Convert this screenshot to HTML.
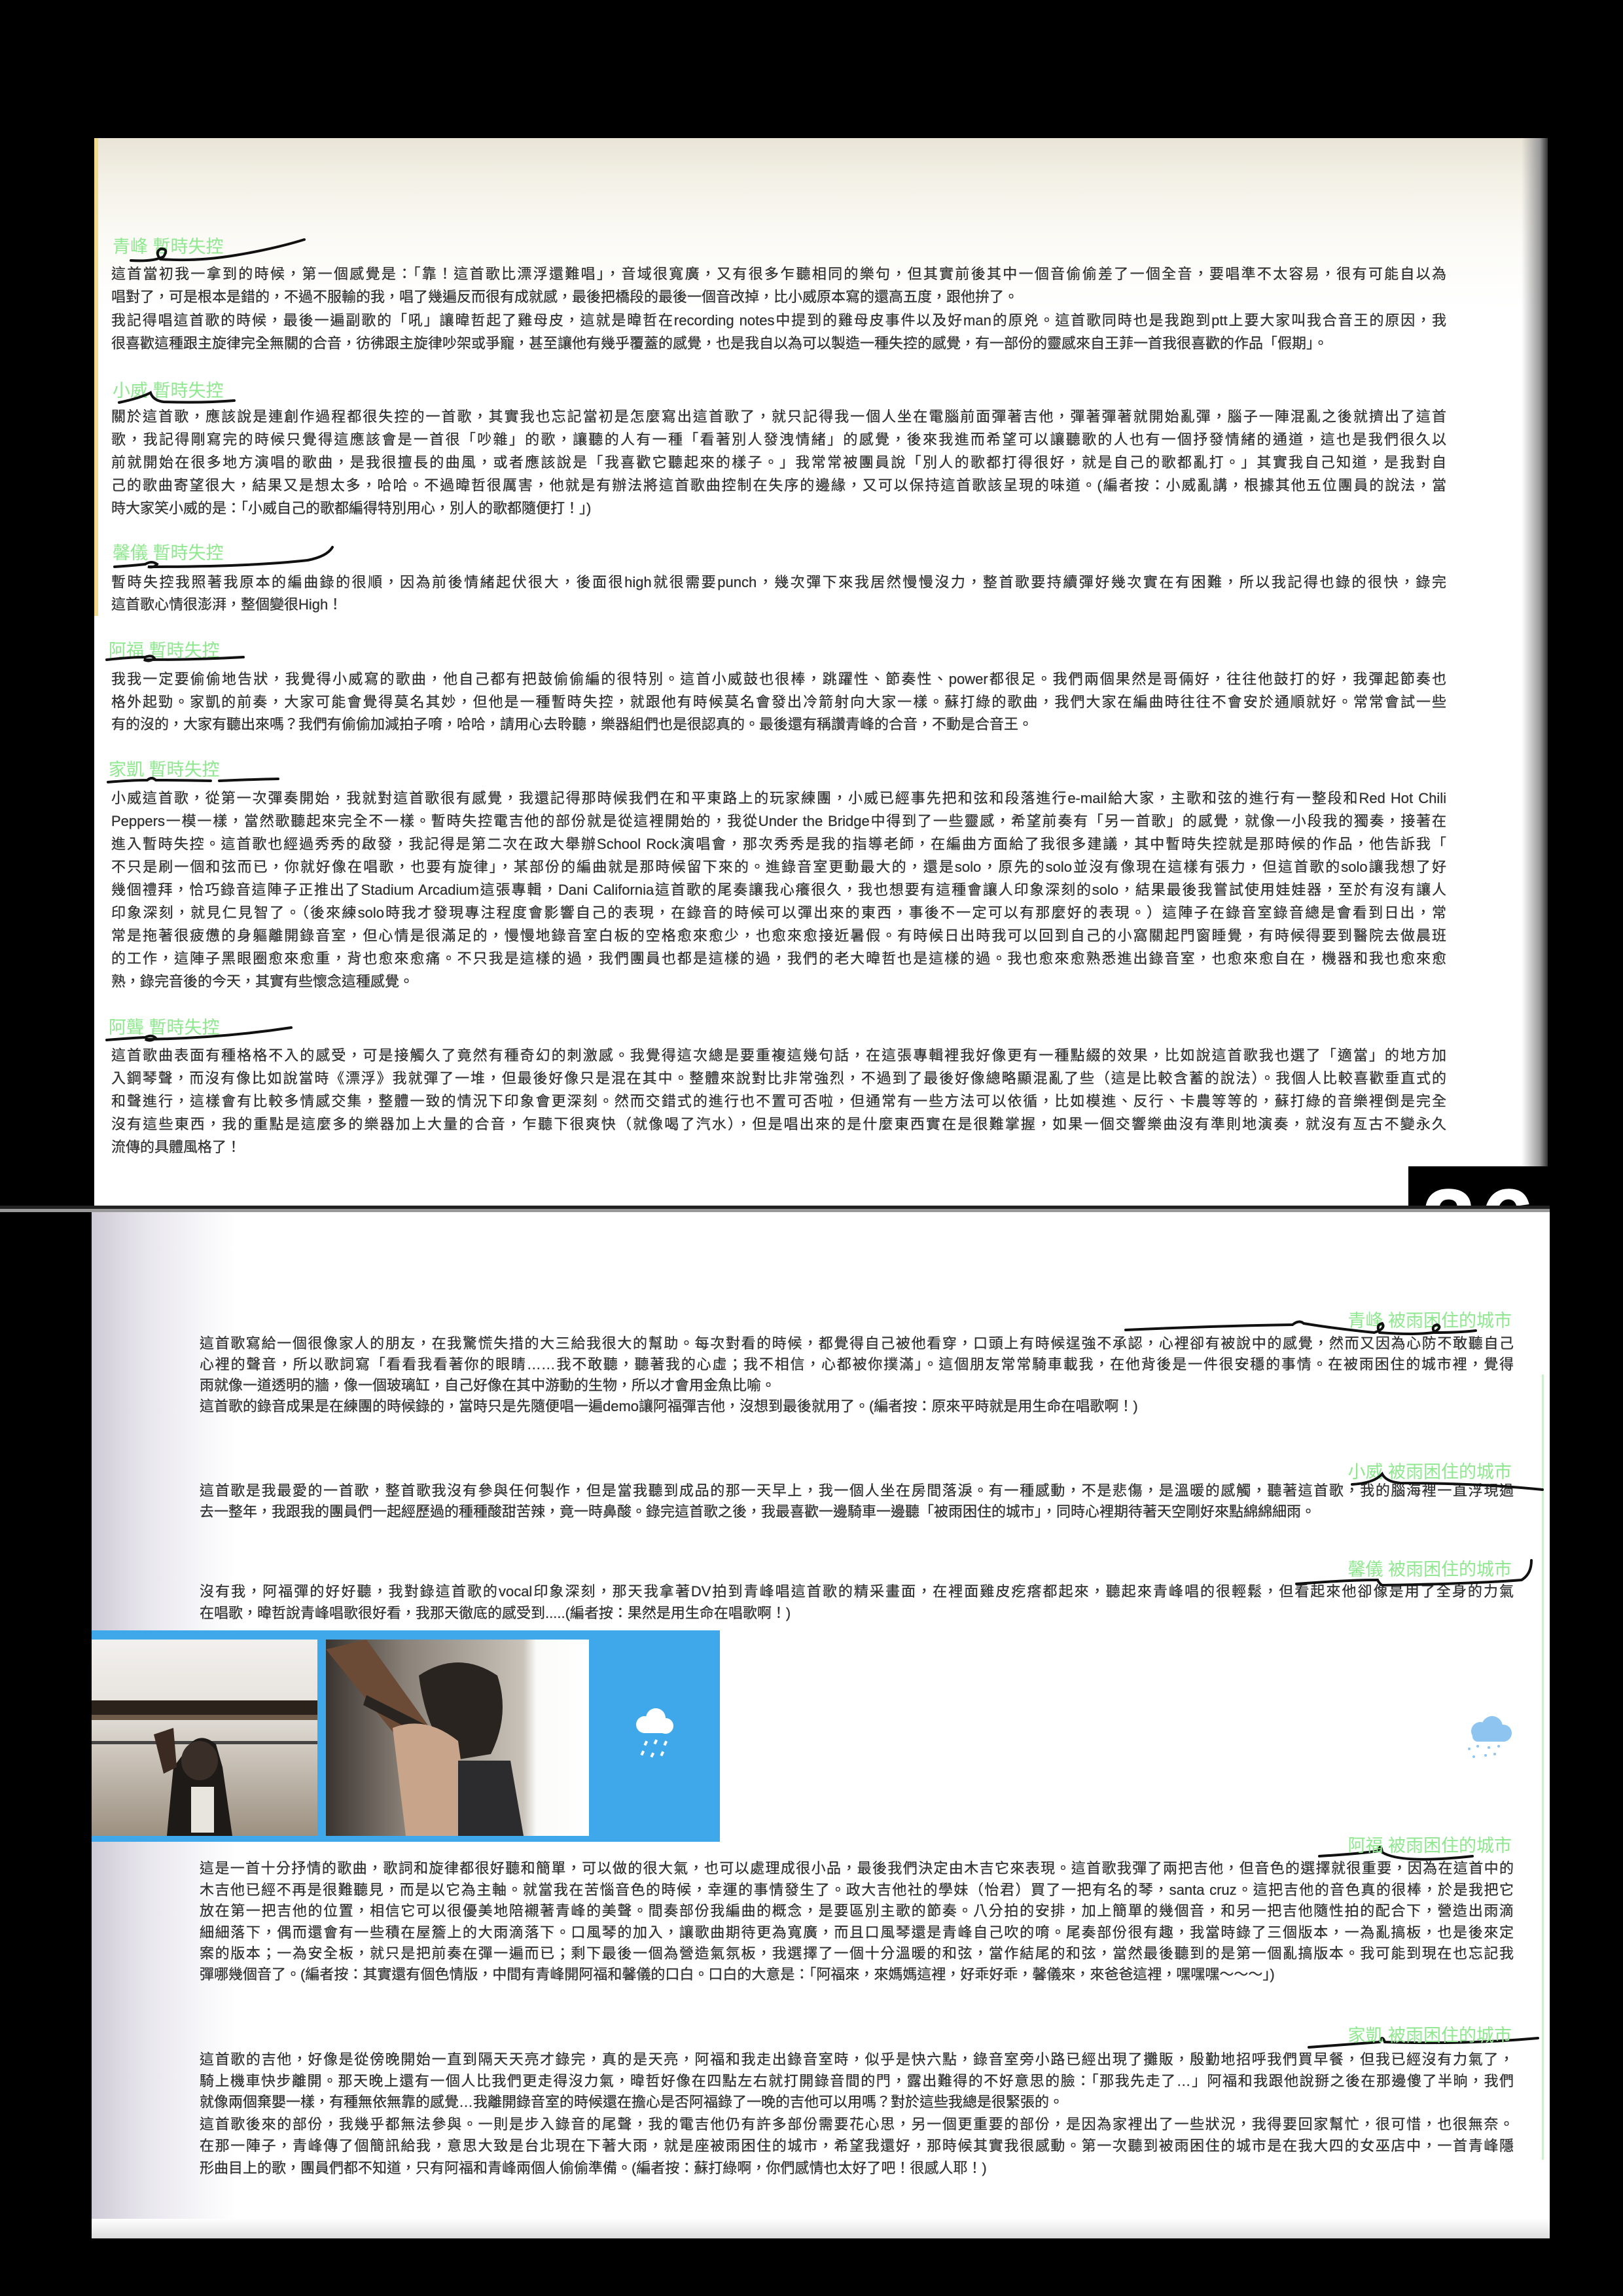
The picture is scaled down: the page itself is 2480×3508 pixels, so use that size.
<!DOCTYPE html>
<html><head><meta charset="utf-8">
<style>
html,body{margin:0;padding:0;background:#000;}
body{width:2480px;height:3508px;position:relative;overflow:hidden;font-family:"Liberation Sans","Noto Sans CJK TC","Noto Sans CJK SC",sans-serif;}
.pg1{position:absolute;left:144px;top:211px;width:2221px;height:1632px;background:linear-gradient(180deg,#e9e4d6 0px,#f3f0e6 60px,#fbfaf5 150px,#fff 260px);}
.pg1r{position:absolute;left:2325px;top:211px;width:40px;height:1632px;background:linear-gradient(90deg,rgba(255,255,255,0),#999 70%,#333);}
.pg1l{position:absolute;left:144px;top:211px;width:6px;height:730px;background:#f3d98a;}
.sep1{position:absolute;left:0;top:1842px;width:2368px;height:5px;background:#222;}
.sep2{position:absolute;left:0;top:1847px;width:2368px;height:5px;background:#999;}
.pg2{position:absolute;left:140px;top:1852px;width:2228px;height:1568px;background:#fff;}
.pg2l{position:absolute;left:140px;top:1852px;width:220px;height:1568px;background:linear-gradient(90deg,#cfcbd6,#e9e7ee 40%,#fff);}
.pg2b{position:absolute;left:140px;top:3390px;width:2228px;height:30px;background:linear-gradient(180deg,#fff,#ddd);}
.num{position:absolute;left:2152px;top:1782px;width:216px;height:60px;background:#000;overflow:hidden;}
.num span{position:absolute;left:20px;top:12px;color:#fff;font:bold 150px/1 "Liberation Sans",sans-serif;letter-spacing:6px;}
.ln{position:absolute;height:30px;line-height:30px;overflow:hidden;font-size:22px;color:#333;text-align:justify;text-align-last:justify;-webkit-text-stroke:0.3px #333;}
.ln.l{text-align-last:left;}
.t{left:170px;width:2040px;}
.b{left:305px;width:2008px;}
.h{position:absolute;font-size:27px;line-height:34px;color:#8fe88f;white-space:nowrap;}
.hr{text-align:right;width:400px;left:1910px;}
svg{position:absolute;left:0;top:0;}
</style></head><body>
<div class="pg1"></div>
<div class="pg1r"></div>
<div class="pg1l"></div>
<div class="num"><span>26</span></div>
<div class="sep1"></div><div class="sep2"></div>
<div class="pg2"></div>
<div class="pg2l"></div>
<div class="pg2b"></div>
<div style="position:absolute;left:2356px;top:2100px;width:3px;height:1200px;background:#cfeecf"></div>

<!-- TOP PAGE -->
<div class="h" style="left:172px;top:360px">青峰 暫時失控</div>
<div class="ln t" style="top:404px">這首當初我一拿到的時候，第一個感覺是：「靠！這首歌比漂浮還難唱」，音域很寬廣，又有很多乍聽相同的樂句，但其實前後其中一個音偷偷差了一個全音，要唱準不太容易，很有可能自以為</div>
<div class="ln t l" style="top:439px">唱對了，可是根本是錯的，不過不服輸的我，唱了幾遍反而很有成就感，最後把橋段的最後一個音改掉，比小威原本寫的還高五度，跟他拚了。</div>
<div class="ln t" style="top:475px">我記得唱這首歌的時候，最後一遍副歌的「吼」讓暐哲起了雞母皮，這就是暐哲在recording notes中提到的雞母皮事件以及好man的原兇。這首歌同時也是我跑到ptt上要大家叫我合音王的原因，我</div>
<div class="ln t l" style="top:510px">很喜歡這種跟主旋律完全無關的合音，彷彿跟主旋律吵架或爭寵，甚至讓他有幾乎覆蓋的感覺，也是我自以為可以製造一種失控的感覺，有一部份的靈感來自王菲一首我很喜歡的作品「假期」。</div>

<div class="h" style="left:172px;top:580px">小威 暫時失控</div>
<div class="ln t" style="top:622px">關於這首歌，應該說是連創作過程都很失控的一首歌，其實我也忘記當初是怎麼寫出這首歌了，就只記得我一個人坐在電腦前面彈著吉他，彈著彈著就開始亂彈，腦子一陣混亂之後就擠出了這首</div>
<div class="ln t" style="top:657px">歌，我記得剛寫完的時候只覺得這應該會是一首很「吵雜」的歌，讓聽的人有一種「看著別人發洩情緒」的感覺，後來我進而希望可以讓聽歌的人也有一個抒發情緒的通道，這也是我們很久以</div>
<div class="ln t" style="top:692px">前就開始在很多地方演唱的歌曲，是我很擅長的曲風，或者應該說是「我喜歡它聽起來的樣子。」我常常被團員說「別人的歌都打得很好，就是自己的歌都亂打。」其實我自己知道，是我對自</div>
<div class="ln t" style="top:727px">己的歌曲寄望很大，結果又是想太多，哈哈。不過暐哲很厲害，他就是有辦法將這首歌曲控制在失序的邊緣，又可以保持這首歌該呈現的味道。(編者按：小威亂講，根據其他五位團員的說法，當</div>
<div class="ln t l" style="top:762px">時大家笑小威的是：「小威自己的歌都編得特別用心，別人的歌都隨便打！」)</div>

<div class="h" style="left:172px;top:828px">馨儀 暫時失控</div>
<div class="ln t" style="top:875px">暫時失控我照著我原本的編曲錄的很順，因為前後情緒起伏很大，後面很high就很需要punch，幾次彈下來我居然慢慢沒力，整首歌要持續彈好幾次實在有困難，所以我記得也錄的很快，錄完</div>
<div class="ln t l" style="top:909px">這首歌心情很澎湃，整個變很High！</div>

<div class="h" style="left:166px;top:977px">阿福 暫時失控</div>
<div class="ln t" style="top:1023px">我我一定要偷偷地告狀，我覺得小威寫的歌曲，他自己都有把鼓偷偷編的很特別。這首小威鼓也很棒，跳躍性、節奏性、power都很足。我們兩個果然是哥倆好，往往他鼓打的好，我彈起節奏也</div>
<div class="ln t" style="top:1058px">格外起勁。家凱的前奏，大家可能會覺得莫名其妙，但他是一種暫時失控，就跟他有時候莫名會發出冷箭射向大家一樣。蘇打綠的歌曲，我們大家在編曲時往往不會安於通順就好。常常會試一些</div>
<div class="ln t l" style="top:1092px">有的沒的，大家有聽出來嗎？我們有偷偷加減拍子唷，哈哈，請用心去聆聽，樂器組們也是很認真的。最後還有稱讚青峰的合音，不動是合音王。</div>

<div class="h" style="left:166px;top:1159px">家凱 暫時失控</div>
<div class="ln t" style="top:1205px">小威這首歌，從第一次彈奏開始，我就對這首歌很有感覺，我還記得那時候我們在和平東路上的玩家練團，小威已經事先把和弦和段落進行e-mail給大家，主歌和弦的進行有一整段和Red Hot Chili</div>
<div class="ln t" style="top:1240px">Peppers一模一樣，當然歌聽起來完全不一樣。暫時失控電吉他的部份就是從這裡開始的，我從Under the Bridge中得到了一些靈感，希望前奏有「另一首歌」的感覺，就像一小段我的獨奏，接著在</div>
<div class="ln t" style="top:1275px">進入暫時失控。這首歌也經過秀秀的啟發，我記得是第二次在政大舉辦School Rock演唱會，那次秀秀是我的指導老師，在編曲方面給了我很多建議，其中暫時失控就是那時候的作品，他告訴我「</div>
<div class="ln t" style="top:1310px">不只是刷一個和弦而已，你就好像在唱歌，也要有旋律」，某部份的編曲就是那時候留下來的。進錄音室更動最大的，還是solo，原先的solo並沒有像現在這樣有張力，但這首歌的solo讓我想了好</div>
<div class="ln t" style="top:1345px">幾個禮拜，恰巧錄音這陣子正推出了Stadium Arcadium這張專輯，Dani California這首歌的尾奏讓我心癢很久，我也想要有這種會讓人印象深刻的solo，結果最後我嘗試使用娃娃器，至於有沒有讓人</div>
<div class="ln t" style="top:1380px">印象深刻，就見仁見智了。（後來練solo時我才發現專注程度會影響自己的表現，在錄音的時候可以彈出來的東西，事後不一定可以有那麼好的表現。）這陣子在錄音室錄音總是會看到日出，常</div>
<div class="ln t" style="top:1415px">常是拖著很疲憊的身軀離開錄音室，但心情是很滿足的，慢慢地錄音室白板的空格愈來愈少，也愈來愈接近暑假。有時候日出時我可以回到自己的小窩關起門窗睡覺，有時候得要到醫院去做晨班</div>
<div class="ln t" style="top:1450px">的工作，這陣子黑眼圈愈來愈重，背也愈來愈痛。不只我是這樣的過，我們團員也都是這樣的過，我們的老大暐哲也是這樣的過。我也愈來愈熟悉進出錄音室，也愈來愈自在，機器和我也愈來愈</div>
<div class="ln t l" style="top:1485px">熟，錄完音後的今天，其實有些懷念這種感覺。</div>

<div class="h" style="left:166px;top:1553px">阿聾 暫時失控</div>
<div class="ln t" style="top:1598px">這首歌曲表面有種格格不入的感受，可是接觸久了竟然有種奇幻的刺激感。我覺得這次總是要重複這幾句話，在這張專輯裡我好像更有一種點綴的效果，比如說這首歌我也選了「適當」的地方加</div>
<div class="ln t" style="top:1633px">入鋼琴聲，而沒有像比如說當時《漂浮》我就彈了一堆，但最後好像只是混在其中。整體來說對比非常強烈，不過到了最後好像總略顯混亂了些（這是比較含蓄的說法）。我個人比較喜歡垂直式的</div>
<div class="ln t" style="top:1668px">和聲進行，這樣會有比較多情感交集，整體一致的情況下印象會更深刻。然而交錯式的進行也不置可否啦，但通常有一些方法可以依循，比如模進、反行、卡農等等的，蘇打綠的音樂裡倒是完全</div>
<div class="ln t" style="top:1703px">沒有這些東西，我的重點是這麼多的樂器加上大量的合音，乍聽下很爽快（就像喝了汽水），但是唱出來的是什麼東西實在是很難掌握，如果一個交響樂曲沒有準則地演奏，就沒有亙古不變永久</div>
<div class="ln t l" style="top:1738px">流傳的具體風格了！</div>

<!-- BOTTOM PAGE -->
<div class="h hr" style="top:2001px">青峰 被雨困住的城市</div>
<div class="ln b" style="top:2038px">這首歌寫給一個很像家人的朋友，在我驚慌失措的大三給我很大的幫助。每次對看的時候，都覺得自己被他看穿，口頭上有時候逞強不承認，心裡卻有被說中的感覺，然而又因為心防不敢聽自己</div>
<div class="ln b" style="top:2070px">心裡的聲音，所以歌詞寫「看看我看著你的眼睛……我不敢聽，聽著我的心虛；我不相信，心都被你撲滿」。這個朋友常常騎車載我，在他背後是一件很安穩的事情。在被雨困住的城市裡，覺得</div>
<div class="ln b l" style="top:2102px">雨就像一道透明的牆，像一個玻璃缸，自己好像在其中游動的生物，所以才會用金魚比喻。</div>
<div class="ln b l" style="top:2134px">這首歌的錄音成果是在練團的時候錄的，當時只是先隨便唱一遍demo讓阿福彈吉他，沒想到最後就用了。(編者按：原來平時就是用生命在唱歌啊！)</div>

<div class="h hr" style="top:2232px">小威 被雨困住的城市</div>
<div class="ln b" style="top:2263px">這首歌是我最愛的一首歌，整首歌我沒有參與任何製作，但是當我聽到成品的那一天早上，我一個人坐在房間落淚。有一種感動，不是悲傷，是溫暖的感觸，聽著這首歌，我的腦海裡一直浮現過</div>
<div class="ln b l" style="top:2295px">去一整年，我跟我的團員們一起經歷過的種種酸甜苦辣，竟一時鼻酸。錄完這首歌之後，我最喜歡一邊騎車一邊聽「被雨困住的城市」，同時心裡期待著天空剛好來點綿綿細雨。</div>

<div class="h hr" style="top:2381px">馨儀 被雨困住的城市</div>
<div class="ln b" style="top:2417px">沒有我，阿福彈的好好聽，我對錄這首歌的vocal印象深刻，那天我拿著DV拍到青峰唱這首歌的精采畫面，在裡面雞皮疙瘩都起來，聽起來青峰唱的很輕鬆，但看起來他卻像是用了全身的力氣</div>
<div class="ln b l" style="top:2450px">在唱歌，暐哲說青峰唱歌很好看，我那天徹底的感受到.....(編者按：果然是用生命在唱歌啊！)</div>

<!-- photo band -->
<div style="position:absolute;left:140px;top:2491px;width:960px;height:323px;background:#3ea8ea"></div>
<svg width="2480" height="3508" viewBox="0 0 2480 3508">
  <defs>
    <linearGradient id="p1" x1="0" y1="0" x2="0" y2="1"><stop offset="0" stop-color="#f2f0ee"/><stop offset="0.35" stop-color="#e6e2dc"/><stop offset="1" stop-color="#9c9080"/></linearGradient>
    <linearGradient id="p2" x1="0" y1="0" x2="1" y2="0"><stop offset="0" stop-color="#3a3430"/><stop offset="0.3" stop-color="#8a8278"/><stop offset="0.75" stop-color="#c9c3ba"/><stop offset="0.8" stop-color="#fbfbfa"/><stop offset="1" stop-color="#fff"/></linearGradient>
  </defs>
  <rect x="140" y="2505" width="345" height="300" fill="url(#p1)"/>
  <rect x="140" y="2598" width="345" height="22" fill="#2b221c"/>
  <rect x="140" y="2620" width="345" height="8" fill="#6d5a48"/>
  <rect x="140" y="2660" width="345" height="5" fill="#444"/>
  <path d="M280 2680 Q300 2640 330 2665 L340 2700 L355 2805 L255 2805 L265 2700 Z" fill="#1e1a18"/>
  <ellipse cx="305" cy="2690" rx="28" ry="30" fill="#3a2e28"/>
  <rect x="292" y="2730" width="35" height="70" fill="#e8e4de"/>
  <path d="M235 2650 L265 2640 L270 2700 L250 2710 Z" fill="#3b2a22"/>
  <rect x="498" y="2505" width="402" height="300" fill="url(#p2)"/>
  <path d="M498 2520 L560 2505 L700 2700 L660 2720 Z" fill="#6b4a36"/>
  <path d="M560 2590 L700 2660 L690 2675 L555 2605 Z" fill="#2a2420"/>
  <path d="M640 2560 Q700 2520 760 2560 Q780 2620 750 2680 L690 2690 Q650 2640 640 2560 Z" fill="#2a2420"/>
  <path d="M600 2640 Q650 2620 700 2660 L720 2805 L620 2805 Z" fill="#c8a48a"/>
  <path d="M700 2690 L780 2690 L800 2805 L700 2805 Z" fill="#2c2c2e"/>
  <g fill="#fff">
    <circle cx="985" cy="2635" r="13"/><circle cx="1002" cy="2625" r="15"/><circle cx="1017" cy="2637" r="12"/><rect x="980" y="2635" width="40" height="13" rx="6"/>
    <rect x="985" y="2660" width="4" height="7" transform="rotate(25 987 2663)"/><rect x="1000" y="2658" width="4" height="7" transform="rotate(25 1002 2661)"/><rect x="1015" y="2660" width="4" height="7" transform="rotate(25 1017 2663)"/>
    <rect x="980" y="2675" width="4" height="7" transform="rotate(25 982 2678)"/><rect x="995" y="2678" width="4" height="7" transform="rotate(25 997 2681)"/><rect x="1010" y="2676" width="4" height="7" transform="rotate(25 1012 2679)"/>
  </g>
  <g fill="#8ec4f0">
    <circle cx="2262" cy="2645" r="14"/><circle cx="2280" cy="2638" r="16"/><circle cx="2297" cy="2648" r="13"/><rect x="2250" y="2645" width="56" height="16" rx="8"/>
    <circle cx="2245" cy="2672" r="2"/><circle cx="2258" cy="2668" r="2"/><circle cx="2275" cy="2670" r="2"/><circle cx="2290" cy="2668" r="2"/><circle cx="2252" cy="2684" r="2"/><circle cx="2270" cy="2682" r="2"/><circle cx="2284" cy="2680" r="2"/>
  </g>
  <g fill="none" stroke="#111" stroke-width="4" stroke-linecap="round">
    <path d="M200 398 Q235 400 250 392 Q258 380 246 380 Q236 385 245 396 Q300 400 360 390 Q420 380 465 366"/>
    <path d="M182 615 Q215 608 230 600 Q234 612 250 614 Q310 616 358 612"/>
    <path d="M175 866 Q205 864 222 862 Q232 856 240 862 Q236 868 226 866 Q380 866 470 856 Q500 850 508 836"/>
    <path d="M163 1008 Q200 1004 222 1004 Q232 1000 236 1006 Q228 1012 220 1008 Q300 1008 372 1004"/>
    <path d="M165 1195 Q200 1192 225 1192 Q232 1186 238 1192 Q280 1192 322 1193 M335 1193 Q380 1191 425 1190"/>
    <path d="M163 1589 Q200 1586 222 1585 Q232 1580 238 1586 Q230 1592 222 1588 Q340 1586 445 1570"/>
    <path d="M1720 2032 Q1850 2026 1975 2024 Q1985 2016 1992 2022 Q2040 2030 2100 2036 Q2118 2030 2112 2022 Q2102 2024 2108 2036 Q2160 2040 2190 2036 Q2205 2028 2196 2024 Q2186 2026 2192 2036 Q2230 2036 2255 2033"/>
    <path d="M2066 2268 Q2100 2266 2112 2252 Q2118 2264 2140 2266 Q2260 2266 2357 2276"/>
    <path d="M1981 2420 Q2060 2414 2105 2414 Q2108 2420 2112 2422 Q2250 2420 2325 2414 Q2340 2405 2340 2384"/>
    <path d="M2016 2836 Q2080 2832 2106 2828 Q2110 2815 2112 2830 Q2140 2848 2250 2836"/>
    <path d="M2000 3128 Q2080 3122 2108 3120 Q2112 3108 2116 3120 Q2240 3124 2350 3114"/>
  </g>
</svg>

<div class="ln b" style="top:2840px">這是一首十分抒情的歌曲，歌詞和旋律都很好聽和簡單，可以做的很大氣，也可以處理成很小品，最後我們決定由木吉它來表現。這首歌我彈了兩把吉他，但音色的選擇就很重要，因為在這首中的</div>
<div class="ln b" style="top:2873px">木吉他已經不再是很難聽見，而是以它為主軸。就當我在苦惱音色的時候，幸運的事情發生了。政大吉他社的學妹（怡君）買了一把有名的琴，santa cruz。這把吉他的音色真的很棒，於是我把它</div>
<div class="ln b" style="top:2905px">放在第一把吉他的位置，相信它可以很優美地陪襯著青峰的美聲。間奏部份我編曲的概念，是要區別主歌的節奏。八分拍的安排，加上簡單的幾個音，和另一把吉他隨性拍的配合下，營造出雨滴</div>
<div class="ln b" style="top:2938px">細細落下，偶而還會有一些積在屋簷上的大雨滴落下。口風琴的加入，讓歌曲期待更為寬廣，而且口風琴還是青峰自己吹的唷。尾奏部份很有趣，我當時錄了三個版本，一為亂搞板，也是後來定</div>
<div class="ln b" style="top:2970px">案的版本；一為安全板，就只是把前奏在彈一遍而已；剩下最後一個為營造氣氛板，我選擇了一個十分溫暖的和弦，當作結尾的和弦，當然最後聽到的是第一個亂搞版本。我可能到現在也忘記我</div>
<div class="ln b l" style="top:3002px">彈哪幾個音了。(編者按：其實還有個色情版，中間有青峰開阿福和馨儀的口白。口白的大意是：「阿福來，來媽媽這裡，好乖好乖，馨儀來，來爸爸這裡，嘿嘿嘿～～～」)</div>

<div class="h hr" style="top:2803px">阿福 被雨困住的城市</div>
<div class="h hr" style="top:3093px">家凱 被雨困住的城市</div>

<div class="ln b" style="top:3132px">這首歌的吉他，好像是從傍晚開始一直到隔天天亮才錄完，真的是天亮，阿福和我走出錄音室時，似乎是快六點，錄音室旁小路已經出現了攤販，殷勤地招呼我們買早餐，但我已經沒有力氣了，</div>
<div class="ln b" style="top:3165px">騎上機車快步離開。那天晚上還有一個人比我們更走得沒力氣，暐哲好像在四點左右就打開錄音間的門，露出難得的不好意思的臉：「那我先走了…」阿福和我跟他說掰之後在那邊傻了半晌，我們</div>
<div class="ln b l" style="top:3197px">就像兩個棄嬰一樣，有種無依無靠的感覺…我離開錄音室的時候還在擔心是否阿福錄了一晚的吉他可以用嗎？對於這些我總是很緊張的。</div>
<div class="ln b" style="top:3231px">這首歌後來的部份，我幾乎都無法參與。一則是步入錄音的尾聲，我的電吉他仍有許多部份需要花心思，另一個更重要的部份，是因為家裡出了一些狀況，我得要回家幫忙，很可惜，也很無奈。</div>
<div class="ln b" style="top:3264px">在那一陣子，青峰傳了個簡訊給我，意思大致是台北現在下著大雨，就是座被雨困住的城市，希望我還好，那時候其實我很感動。第一次聽到被雨困住的城市是在我大四的女巫店中，一首青峰隱</div>
<div class="ln b l" style="top:3298px">形曲目上的歌，團員們都不知道，只有阿福和青峰兩個人偷偷準備。(編者按：蘇打綠啊，你們感情也太好了吧！很感人耶！)</div>
</body></html>
